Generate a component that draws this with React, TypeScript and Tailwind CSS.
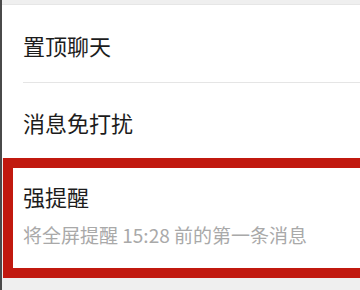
import React from 'react';

// Chat settings list: pinned / mute / strong reminder (highlighted)

const font = { fontFamily: '"Noto Sans CJK SC", "Noto Sans", sans-serif' };

export default function App() {
  return (
    <div
      className="w-[360px] h-[290px] flex flex-col bg-[#efefef] border-l-2 border-[#4a4a4a] overflow-hidden"
      style={font}
    >
      <div className="h-[5px] bg-[#efefef] border-b border-[#e6e6e6]" />

      <div className="bg-white">
        <div className="h-[77px] pl-[21px] flex items-center pt-[3px]">
          <span className="text-[22px] text-[#1c1c1c] leading-none">置顶聊天</span>
        </div>
        <div className="ml-[21px] h-px bg-[#e5e5e5]" />
        <div className="h-[75px] pl-[21px] flex items-center pt-[3px]">
          <span className="text-[22px] text-[#1c1c1c] leading-none">消息免打扰</span>
        </div>
      </div>

      <div className="ml-px bg-white border-y-[10px] border-l-[10px] border-[#c1190f] h-[120px] pl-[10px] flex flex-col">
        <span className="mt-[17px] text-[22px] text-[#1c1c1c] leading-none">强提醒</span>
        <span className="mt-[18px] text-[19px] text-[#a9a9a9] leading-none">
          将全屏提醒 15:28 前的第一条消息
        </span>
      </div>

      <div className="flex-1 bg-[#efefef]" />
    </div>
  );
}
